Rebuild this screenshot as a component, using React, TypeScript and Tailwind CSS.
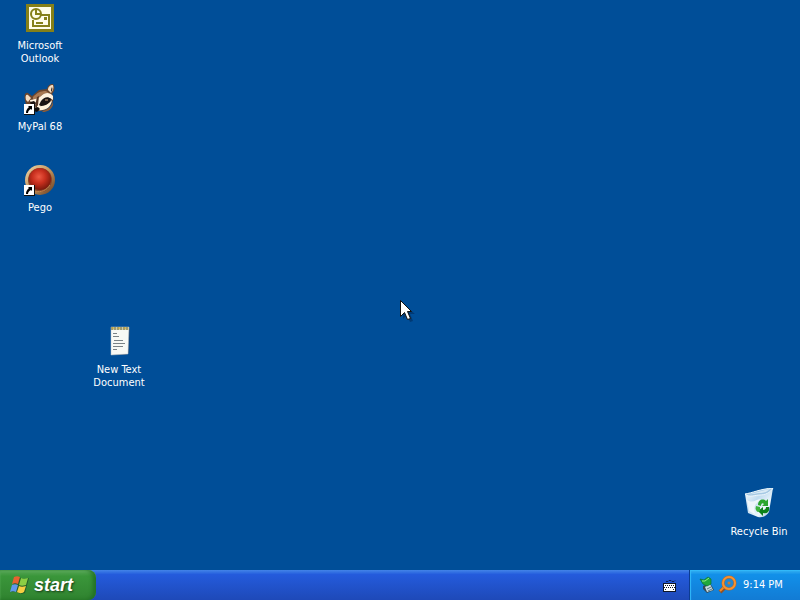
import type { ReactNode } from "react";

function ShortcutArrow() {
  return (
    <g>
      <rect x="0" y="21" width="11" height="11" fill="#111" />
      <rect x="0" y="21" width="10" height="10" fill="#fff" />
      <path d="M4 23h4v4l-1-1c-2 1-3 2-3 4H2c0-3 1-4 3-6z" fill="#000" />
    </g>
  );
}

function OutlookIcon() {
  return (
    <svg className="size-8" viewBox="0 0 32 32" aria-hidden="true">
      <rect x="2" y="2" width="28" height="28" fill="#858019" />
      <rect x="5" y="5" width="22" height="22" fill="#fffde9" />
      <path d="M15 13h10v11H9v-6" fill="#fffde9" stroke="#858019" strokeWidth="2" />
      <circle cx="12" cy="12" r="5" fill="#fffde9" stroke="#858019" strokeWidth="2" />
      <path d="M12 8v4h4" fill="none" stroke="#858019" strokeWidth="2" />
      <path d="M20 15h3v3h-3z" fill="#858019" />
      <path d="M12 21h7" stroke="#858019" strokeWidth="2" />
    </svg>
  );
}

function RaccoonIcon() {
  return (
    <svg className="size-8" viewBox="0 0 32 32" aria-hidden="true">
      <path d="M1 17c-1-5 0-8 3-7l4 3 7-6 8-1c1-4 3-5 6-5 2 3 2 7-1 10 3 4 1 9-3 13-3 4-10 5-15 3-5 0-8-3-9-10z" fill="#6b452d" />
      <path d="M2 17c-1-4 0-6 2-5l3 3-3 4zM24 7c0-3 2-5 5-5 1 3 0 6-2 8z" fill="#f4dcc0" />
      <path d="M27 9c0-2 0-3 1-5 1 2 0 4-1 5z" fill="#2b1c16" />
      <path d="M9 14c4-4 7-6 13-6l3 2c-5 0-8 2-10 5l-6 3z" fill="#a87853" />
      <path d="M6 17c5-1 8-1 11-4 4-4 9-4 12 0v4c-5-4-8-2-10 1l-4 8c-4 0-8-3-9-9z" fill="#fff2df" />
      <path d="M17 18c3-4 7-5 10-2-1 4-4 6-8 8l-4-2z" fill="#191313" />
      <path d="M6 19l4-1 2 2-2 4c-2-1-4-3-4-5z" fill="#1b1210" />
      <path d="M13 14l2-1-1 9-2 4-1-3z" fill="#523424" />
      <path d="M13 23c6 1 11-1 15-6-1 8-7 11-14 10z" fill="#fff2dc" />
      <path d="M10 25l4-1 2 2-3 3-3-1z" fill="#100d0c" />
      <path d="M21 17h3" stroke="#d8a780" />
      <path d="M18 28c5-1 9-4 11-9v3c-2 5-6 7-10 7z" fill="#8e5b35" />
      <ShortcutArrow />
    </svg>
  );
}

function PegoIcon() {
  return (
    <svg className="size-8" viewBox="0 0 32 32" aria-hidden="true">
      <defs>
        <radialGradient id="pegoBall" cx="45%" cy="40%" r="60%">
          <stop offset="0" stopColor="#ed5a43" />
          <stop offset=".5" stopColor="#c82f1e" />
          <stop offset="1" stopColor="#7b1a0d" />
        </radialGradient>
        <linearGradient id="pegoRim" x1="0" y1="0" x2="1" y2="1">
          <stop offset="0" stopColor="#f1d9ab" />
          <stop offset=".5" stopColor="#c4935c" />
          <stop offset="1" stopColor="#5f371d" />
        </linearGradient>
      </defs>
      <circle cx="16" cy="16" r="15" fill="url(#pegoRim)" />
      <circle cx="16" cy="16" r="12" fill="#88472a" />
      <circle cx="16" cy="15" r="11" fill="url(#pegoBall)" />
      <path d="M11 27c6 2 12-1 15-6" fill="none" stroke="#c1864d" />
      <ShortcutArrow />
    </svg>
  );
}

function NotepadIcon() {
  return (
    <svg className="size-8" viewBox="-1 2 32 32" aria-hidden="true">
      <path d="M8 5h18l-1 24-3 2H8z" fill="#123e70" />
      <path d="M7 3h18l-1 27-17 1z" fill="#f8f9f5" stroke="#b8c2c8" strokeWidth=".5" />
      <path d="M7 3h18v3H7z" fill="#d1cba6" />
      <path d="M8 3v3m3-3v3m3-3v3m3-3v3m3-3v3m3-3v3" stroke="#686c3e" />
      <path d="M9 3v2m6-2v2m6-2v2" stroke="#d5aa27" />
      <path d="M9 9.500h4m-4 3h6m-5 4h9m-10 3h12m-12 3h10m-10 3h4" stroke="#7a8286" />
    </svg>
  );
}

function RecycleBinIcon() {
  return (
    <svg className="size-8" viewBox="0 0 32 32" aria-hidden="true">
      <defs>
        <linearGradient id="binGlass" x1="0" y1="0" x2="1" y2="1">
          <stop offset="0" stopColor="#fff" />
          <stop offset=".4" stopColor="#c1dcf0" />
          <stop offset=".7" stopColor="#eef7fc" />
          <stop offset="1" stopColor="#8db4d4" />
        </linearGradient>
      </defs>
      <path d="M2 6c6 0 15-5 28-6l-4 24c-2 4-7 6-11 5l-10-4z" fill="url(#binGlass)" />
      <path d="M2 6c7-1 15-5 28-6-3 5-8 7-13 7S6 10 2 6z" fill="#a6c9e4" stroke="#edf7fc" />
      <path d="M7 6c6-1 13-4 20-5-4 4-8 4-11 4S9 7 7 6z" fill="#d9eaf5" />
      <path d="M4 12c6 4 9-1 14-1l-5 5c-2 2-2 6-1 10l-6-3z" fill="#fff" opacity=".7" />
      <path d="M15 17c0-5 5-7 8-4l2-2v7h-6l2-2c-2-2-3 0-3 2z" fill="#2aa52e" />
      <path d="M26 19c1 5-2 7-6 6v3l-5-5 5-4v3c2 0 3-1 3-3z" fill="#0c8119" />
      <path d="M13 18l4 1v4l-2 1c-2-1-3-3-2-6z" fill="#3db33d" />
    </svg>
  );
}

function WindowsLogo() {
  return (
    <svg className="size-5" viewBox="0 0 20 20" aria-hidden="true">
      <path d="M5 3c2-1 5-1 6 0 3 1 5 1 8 0l-4 15c-3 1-6 1-8-1-2-1-4 0-6 0z" fill="#173f22" opacity=".6" />
      <path d="M4 2c2-1 4-1 6 0L8 9C6 8 4 8 2 9z" fill="#e76230" />
      <path d="M11 3c2 1 4 1 7 0l-2 7c-3 1-5 1-7 0z" fill="#8bcf44" />
      <path d="M2 10c2-1 4-1 6 0l-2 7c-2-1-4-1-6 0z" fill="#5f98eb" />
      <path d="M9 11c2 1 4 1 7 0l-2 6c-3 2-5 1-7 0z" fill="#f7ce42" />
    </svg>
  );
}

type DesktopItemProps = { label: string; place: string; children: ReactNode };

function DesktopItem({ label, place, children }: DesktopItemProps) {
  return (
    <button type="button" className={`absolute flex w-20 flex-col items-center gap-[5px] ${place}`}>
      {children}
      <span className="w-16 text-center leading-[13px]">{label}</span>
    </button>
  );
}

export default function App() {
  return (
    <div className="flex min-h-screen flex-col bg-[#004e98] font-['DejaVu_Sans_Condensed','DejaVu_Sans',sans-serif] text-[11px] text-white">
      <main className="relative flex-1 overflow-hidden">
        <DesktopItem label="Microsoft Outlook" place="left-0 top-0.5"><OutlookIcon /></DesktopItem>
        <DesktopItem label="MyPal 68" place="left-0 top-[83px]"><RaccoonIcon /></DesktopItem>
        <DesktopItem label="Pego" place="left-0 top-[164px]"><PegoIcon /></DesktopItem>
        <DesktopItem label="New Text Document" place="left-[79px] top-[326px]"><NotepadIcon /></DesktopItem>
        <DesktopItem label="Recycle Bin" place="bottom-8 right-px"><RecycleBinIcon /></DesktopItem>
        <svg className="absolute left-1/2 top-[300px] h-6 w-4" viewBox="0 0 16 24" aria-hidden="true">
          <path d="M3 4v15l4-4 3 7 3-1-3-7h5z" fill="#002b5b" opacity=".6" />
          <path d="M.5.500v16l4-4 3 7 3-1-3-7h4z" fill="#fff" stroke="#111" />
        </svg>
      </main>

      <footer className="flex h-[30px] items-stretch bg-linear-to-b from-[#4384e8] via-[#245bdc] via-15% to-[#1e49b8]">
        <button type="button" className="flex w-24 items-center gap-1 rounded-r-lg bg-linear-to-b from-[#5dac5d] via-[#3a963a] via-20% to-[#308330] pl-2.5 font-['Liberation_Sans',Arial,sans-serif] text-lg leading-5 font-bold italic shadow-[inset_-3px_0_4px_#216f23,inset_0_2px_2px_#69b969]">
          <WindowsLogo />
          <span className="[text-shadow:1px_1px_2px_#173c17]">start</span>
        </button>
        <div className="flex-1" />
        <button type="button" aria-label="Keyboard" className="flex w-10 items-center justify-center">
          <svg className="ml-0.5 size-4" viewBox="0 0 16 16" aria-hidden="true">
            <path d="M4 4.500h2l1-1h2l1 1h2l1-1" fill="none" stroke="#102252" />
            <rect x="1" y="6" width="13" height="9" fill="#111827" />
            <rect x="2" y="7" width="11" height="7" fill="#fff" />
            <path d="M3 8.500h10M2 10.500h11" stroke="#111827" strokeDasharray="1 1" />
            <path d="M3 12.500h1M11 12.500h1" stroke="#111827" />
          </svg>
        </button>
        <div className="flex w-[111px] items-center border-l border-[#0c3c91] bg-linear-to-b from-[#35b2f0] via-[#1290e9] via-15% to-[#127bd4] pl-2 shadow-[inset_1px_1px_1px_#32bafa]">
          <svg className="size-5" viewBox="0 0 20 20" aria-hidden="true">
            <path d="M5 11l7-3 4 7-7 3-4-4z" fill="#354956" />
            <path d="M7 12l5-3 3 6-6 2z" fill="#c9dddf" />
            <path d="M9 14l4-2M10 16l4-2" stroke="#577786" />
            <path d="M2 4l4 1 4-3 3 2v5l-4 2-4-2z" fill="#20a83c" stroke="#087332" strokeWidth=".7" />
            <path d="M4 6h3l4-3" fill="none" stroke="#8dec87" />
          </svg>
          <svg className="size-5" viewBox="0 0 20 20" aria-hidden="true">
            <path d="M8 11l-6 6" stroke="#935024" strokeWidth="4" />
            <path d="M8 10l-6 6" stroke="#f08a24" strokeWidth="2" />
            <circle cx="11" cy="8" r="6" fill="#2387d0" stroke="#bf651f" strokeWidth="3" />
            <circle cx="11" cy="8" r="6" fill="none" stroke="#f49332" strokeWidth="2" />
            <circle cx="11" cy="8" r="1.500" fill="#c97832" />
          </svg>
          <time className="pt-px pl-[5px] whitespace-nowrap">9:14 PM</time>
        </div>
      </footer>
    </div>
  );
}
